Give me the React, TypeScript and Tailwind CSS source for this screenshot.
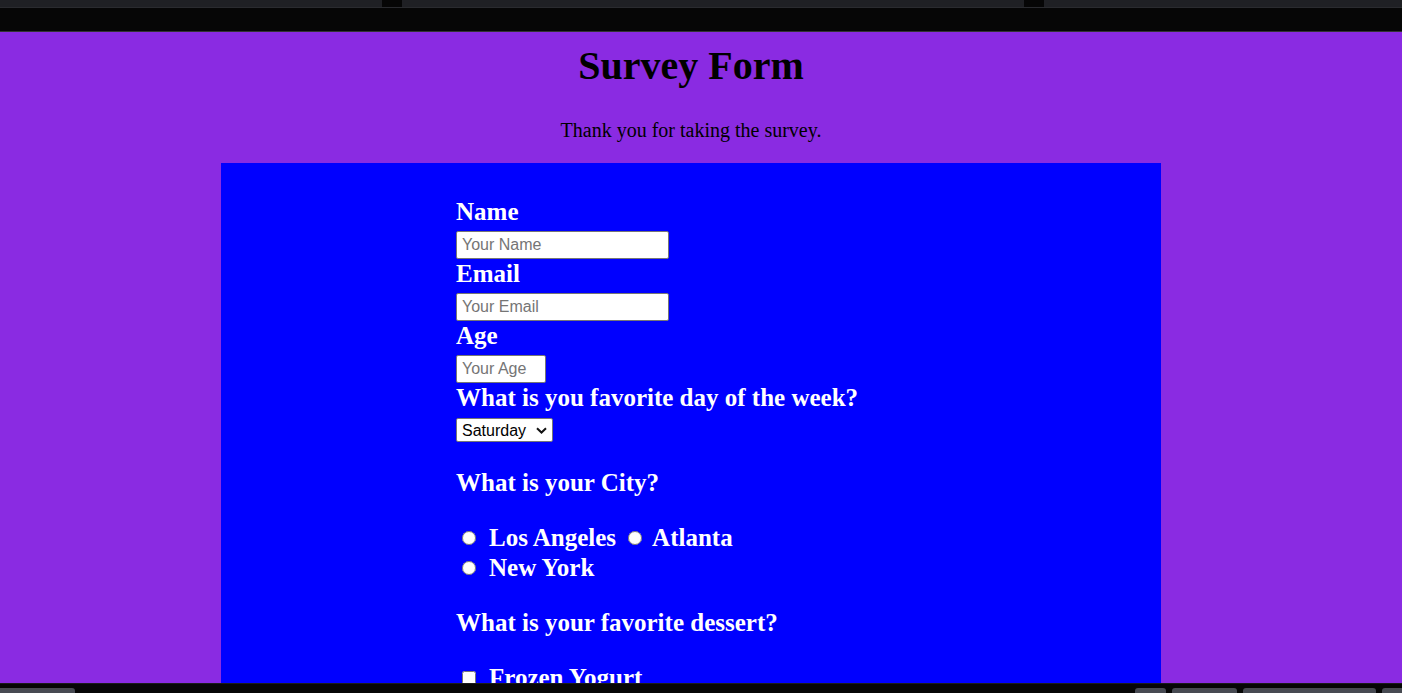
import React from "react";

const serif = "font-[family-name:Liberation_Serif,Times_New_Roman,serif]";
const sans = "font-[family-name:Liberation_Sans,Arial,sans-serif]";

const Label = ({ children }: { children: React.ReactNode }) => (
  <label className="block text-[25px] leading-[29px] font-bold text-white">{children}</label>
);

const TextInput = ({ placeholder, width }: { placeholder: string; width: string }) => (
  <input
    type="text"
    placeholder={placeholder}
    className={`${sans} ${width} mt-[5px] block h-[28px] rounded-[2px] border border-[#767676] bg-white px-[5px] text-[16px] text-black placeholder:text-[#757575] outline-none`}
  />
);

const Choice = ({ type, name, text, first }: { type: string; name: string; text: string; first?: boolean }) => (
  <span className="flex items-center">
    <input
      type={type}
      name={name}
      className={`${first ? "ml-[6px]" : "ml-[12px]"} m-0 h-[14px] w-[14px]`}
    />
    <span className={`${first ? "ml-[13px]" : "ml-[10px]"} text-[25px] font-bold text-white`}>{text}</span>
  </span>
);

export default function App() {
  return (
    <div className={`${serif} flex h-[693px] w-full flex-col overflow-hidden bg-[#060606]`}>
      {/* browser chrome strip */}
      <div className="flex h-[8px] border-b border-[#2a2b2f]">
        <div className="w-[382px] bg-[#1f2024]" />
        <div className="w-[20px]" />
        <div className="w-[622px] bg-[#1f2024]" />
        <div className="w-[20px]" />
        <div className="flex-1 bg-[#1f2024]" />
      </div>
      <div className="h-[24px] border-b border-[#333]" />

      <main className="flex-1 overflow-hidden bg-[#8a2be2]">
        <div className="flex w-[1382px] flex-col items-center pt-[12px]">
          <h1 className="text-[40px] leading-[44px] font-bold text-black">Survey Form</h1>
          <p className="mt-[31px] text-[20px] leading-[22px] text-black">Thank you for taking the survey.</p>

          <form className="mt-[22px] w-[940px] bg-[#0000ff] px-[235px] pt-[34px] pb-[40px]">
            <Label>Name</Label>
            <TextInput placeholder="Your Name" width="w-[213px]" />
            <Label>Email</Label>
            <TextInput placeholder="Your Email" width="w-[213px]" />
            <Label>Age</Label>
            <TextInput placeholder="Your Age" width="w-[90px]" />

            <Label>What is you favorite day of the week?</Label>
            <div className="relative mt-[6px] h-[24px] w-[97px]">
              <select
                defaultValue="Saturday"
                className={`${sans} h-[24px] w-[97px] appearance-none rounded-[2px] border border-[#767676] bg-white pl-[5px] text-[16px] text-black outline-none`}
              >
                {["Sunday", "Monday", "Tuesday", "Wednesday", "Thursday", "Friday", "Saturday"].map((d) => (
                  <option key={d}>{d}</option>
                ))}
              </select>
              <svg className="pointer-events-none absolute top-[9px] left-[80px]" width="11" height="7" viewBox="0 0 11 7">
                <path d="M1 1.2l4.5 4.3 4.5-4.3" fill="none" stroke="#111" strokeWidth="2" />
              </svg>
            </div>

            <div className="mt-[26px]">
              <Label>What is your City?</Label>
            </div>
            <div className="mt-[26px]">
              <div className="flex h-[30px] items-center">
                <Choice type="radio" name="city" text="Los Angeles" first />
                <Choice type="radio" name="city" text="Atlanta" />
              </div>
              <div className="flex h-[29px] items-center">
                <Choice type="radio" name="city" text="New York" first />
              </div>
            </div>

            <div className="mt-[26px]">
              <Label>What is your favorite dessert?</Label>
            </div>
            <div className="mt-[26px]">
              <div className="flex h-[30px] items-center">
                <Choice type="checkbox" name="dessert" text="Frozen Yogurt" first />
              </div>
              <div className="flex h-[30px] items-center">
                <Choice type="checkbox" name="dessert" text="Ice Cream" first />
              </div>
            </div>
          </form>
        </div>
      </main>

      {/* bottom taskbar strip */}
      <div className="flex h-[10px] items-end border-t border-[#1b1b1b] bg-[#060606]">
        <div className="h-[5px] w-[75px] rounded-tr-[3px] bg-[#474a52]" />
        <div className="flex-1" />
        <div className="h-[5px] w-[31px] rounded-t-[3px] bg-[#474a52]" />
        <div className="ml-[6px] h-[5px] w-[65px] rounded-t-[3px] bg-[#474a52]" />
        <div className="ml-[6px] h-[5px] w-[133px] rounded-t-[3px] bg-[#474a52]" />
        <div className="ml-[6px] h-[5px] w-[20px] rounded-tl-[3px] bg-[#474a52]" />
      </div>
    </div>
  );
}
